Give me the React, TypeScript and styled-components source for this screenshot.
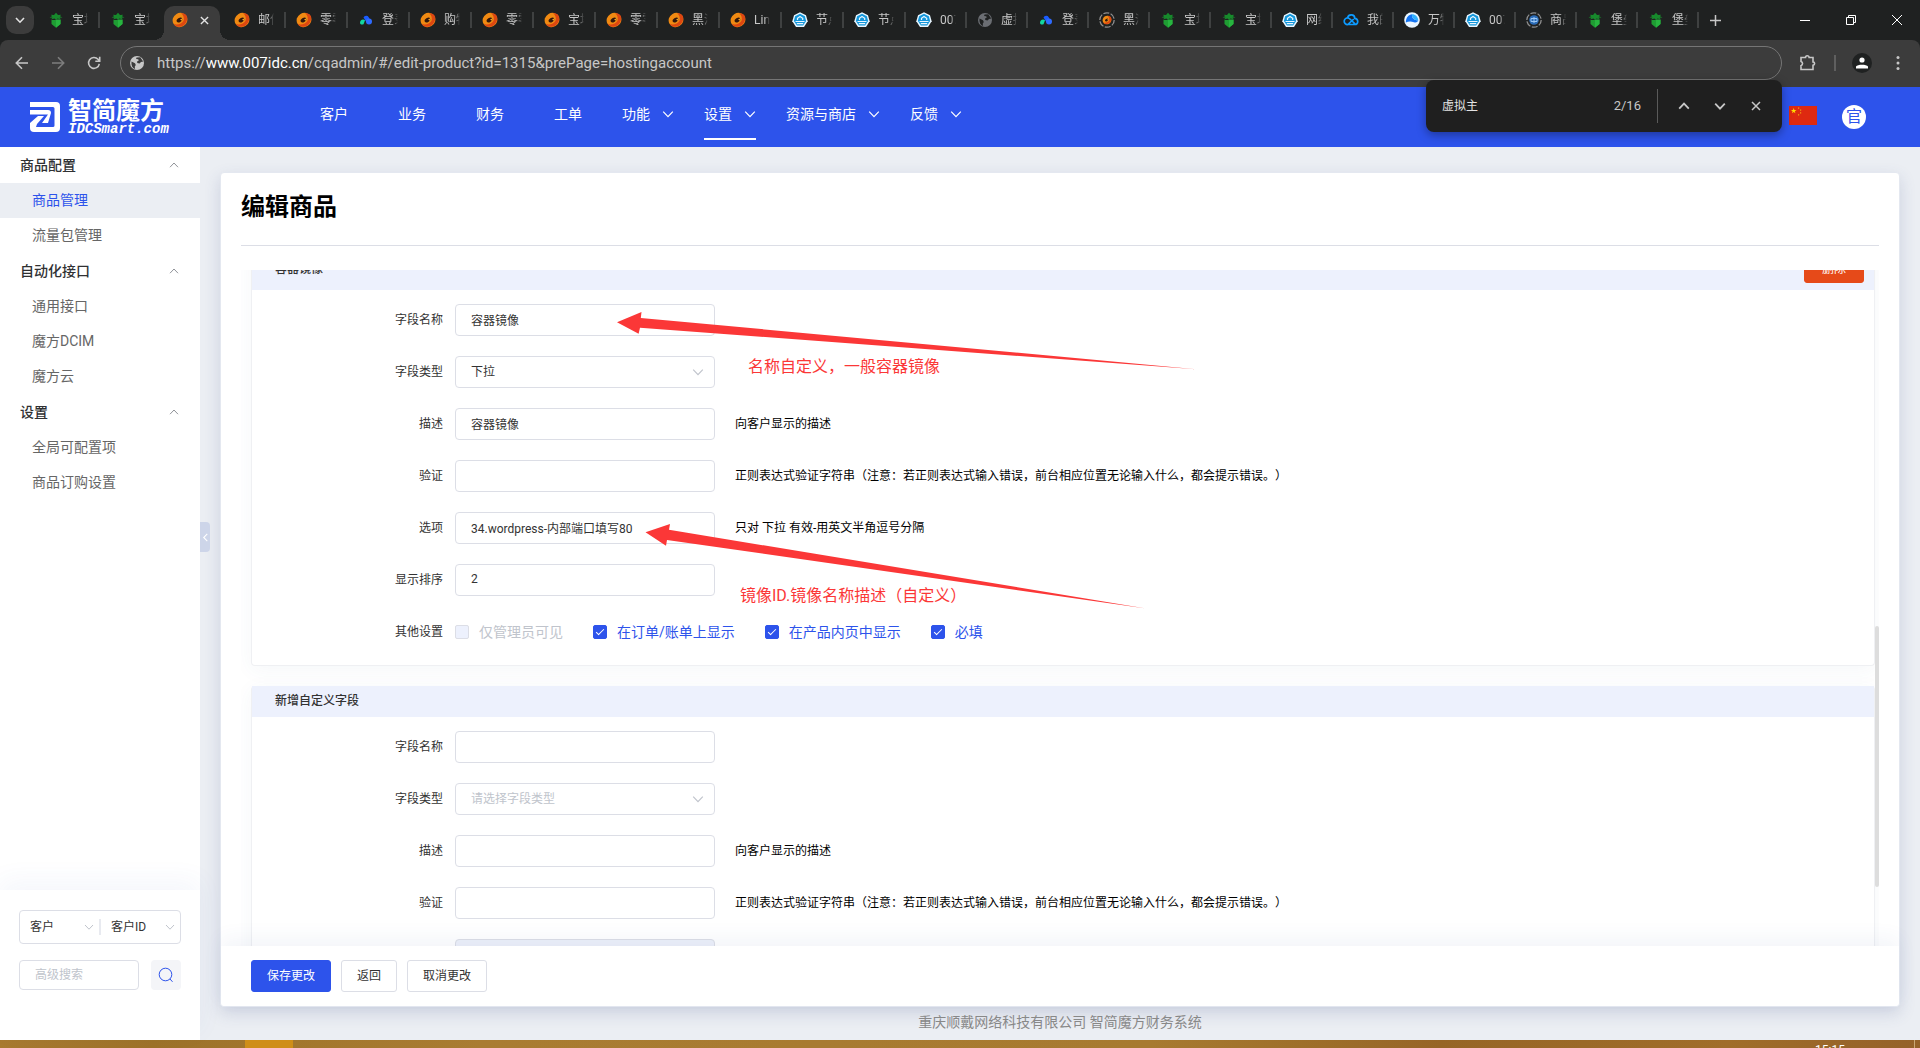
import React, { useId } from "react";
import styled, { createGlobalStyle, css } from "styled-components";

const color = {
  brand: "#2d53eb",
  page: "#ebeef3",
  line: "#dcdee6",
  tint: "#edf1fd",
  text: "#333333",
  muted: "#666666",
  placeholder: "#c0c4cc",
  chromeDark: "#1f2121",
  chrome: "#3c3c3c",
  note: "#fb3737",
  danger: "#e64a19",
};

const GlobalStyle = createGlobalStyle`
  *, *::before, *::after { box-sizing: border-box; }
  body {
    margin: 0;
    background: ${color.page};
    color: ${color.text};
    font-family: Roboto, "Noto Sans CJK SC", sans-serif;
    font-size: 12px;
    line-height: 20px;
    text-spacing-trim: space-all;
  }
  button, input, select { font: inherit; color: inherit; margin: 0; }
  button { border: 0; padding: 0; background: none; cursor: pointer; }
  a { color: inherit; text-decoration: none; }
  h1, h2, p, ul { margin: 0; padding: 0; list-style: none; font-size: inherit; font-weight: inherit; }
  svg { display: block; flex: none; }
`;

const Window = styled.div`
  display: flex;
  flex-direction: column;
  height: 100vh;
  overflow: hidden;
`;

/* ---------- browser tabs ---------- */

const TabStrip = styled.div`
  display: flex;
  flex: none;
  height: 40px;
  padding-left: 6px;
  background: ${color.chromeDark};
  color: #c7c7c7;
`;

const TabSearch = styled.button`
  display: grid;
  place-items: center;
  width: 28px;
  height: 28px;
  margin: 6px 6px 0 0;
  border-radius: 10px;
  background: ${color.chrome};
  color: #e3e3e3;
`;

const Tab = styled.div<{ $width: number; $divider: boolean }>`
  position: relative;
  display: flex;
  align-items: center;
  flex: none;
  gap: 8px;
  width: ${(p) => p.$width}px;
  padding-left: 8px;
  ${(p) =>
    p.$divider &&
    css`
      &::after {
        content: "";
        position: absolute;
        right: 2px;
        top: 12px;
        width: 2px;
        height: 16px;
        background: #3f4141;
      }
    `}
`;

const TabTitle = styled.span`
  width: 16px;
  overflow: hidden;
  white-space: nowrap;
  mask-image: linear-gradient(90deg, #000 65%, transparent);
`;

const ActiveTab = styled.div`
  position: relative;
  display: flex;
  align-items: center;
  flex: none;
  gap: 12px;
  width: 56px;
  height: 34px;
  margin: 6px 6px 0 0;
  padding: 0 8px 6px;
  border-radius: 10px 10px 0 0;
  background: ${color.chrome};
  color: #e3e3e3;
  &::before, &::after {
    content: "";
    position: absolute;
    bottom: 0;
    width: 10px;
    height: 10px;
  }
  &::before {
    left: -10px;
    background: radial-gradient(circle at 0 0, transparent 10px, ${color.chrome} 10px);
  }
  &::after {
    right: -10px;
    background: radial-gradient(circle at 100% 0, transparent 10px, ${color.chrome} 10px);
  }
`;

const NewTab = styled.button`
  display: grid;
  place-items: center;
  width: 28px;
  color: #c7c7c7;
`;

const WindowControls = styled.div`
  display: flex;
  margin-left: auto;
  color: #ffffff;
`;

const WindowButton = styled.button`
  display: grid;
  place-items: center;
  width: 46px;
`;

/* ---------- browser toolbar ---------- */

const ToolbarBack = styled.div`
  flex: none;
  background: ${color.chromeDark};
`;

const Toolbar = styled.div`
  display: flex;
  align-items: center;
  height: 47px;
  padding: 0 4px 2px;
  border-radius: 8px 8px 0 0;
  background: ${color.chrome};
  color: #c7c7c7;
`;

const ToolButton = styled.button<{ $dim?: boolean }>`
  display: grid;
  place-items: center;
  flex: none;
  width: 36px;
  height: 34px;
  color: ${(p) => (p.$dim ? "#7d7d7d" : "#c7c7c7")};
`;

const AddressBar = styled.div`
  display: flex;
  align-items: center;
  flex: 1;
  gap: 12px;
  height: 34px;
  margin: 0 8px;
  padding-left: 8px;
  border: 1px solid #757575;
  border-radius: 17px;
`;

const Address = styled.a`
  font-size: 15px;
  color: #c7c7c7;
  strong { font-weight: 400; color: #ffffff; }
`;

const ToolDivider = styled.span`
  width: 2px;
  height: 16px;
  margin: 0 8px;
  background: #5f5f5f;
`;

const Profile = styled.span`
  display: grid;
  place-items: center;
  width: 20px;
  height: 20px;
  border-radius: 50%;
  background: ${color.chromeDark};
`;

const FindBar = styled.div`
  position: absolute;
  z-index: 5;
  top: 80px;
  right: 138px;
  display: flex;
  align-items: center;
  width: 356px;
  height: 52px;
  padding: 0 8px 0 16px;
  border-radius: 8px;
  background: #1f1f1f;
  box-shadow: 0 3px 10px rgba(0, 0, 0, 0.35);
  color: #e3e3e3;
`;

const FindInput = styled.input`
  flex: 1;
  min-width: 0;
  padding: 0;
  border: 0;
  outline: 0;
  background: none;
`;

const FindCount = styled.span`
  padding-right: 16px;
  font-size: 13px;
  color: #c7c7c7;
`;

const FindActions = styled.div`
  display: flex;
  padding-left: 8px;
  border-left: 1px solid #5a5a5a;
`;

/* ---------- site header ---------- */

const Header = styled.header`
  display: flex;
  flex: none;
  height: 60px;
  background: ${color.brand};
  color: #ffffff;
  font-size: 14px;
`;

const Brand = styled.a`
  display: flex;
  align-items: center;
  gap: 8px;
  width: 295px;
  padding-left: 30px;
`;

const BrandText = styled.span`
  display: flex;
  flex-direction: column;
  white-space: nowrap;
`;

const BrandName = styled.span`
  font-size: 24px;
  font-weight: 700;
  line-height: 24px;
`;

const BrandDomain = styled.span`
  font-family: "Liberation Mono", monospace;
  font-size: 14px;
  font-style: italic;
  font-weight: 700;
  line-height: 12px;
`;

const Menu = styled.nav`
  display: flex;
`;

const MenuLink = styled.a<{ $arrow?: boolean; $active?: boolean }>`
  position: relative;
  display: flex;
  align-items: center;
  gap: 12px;
  margin: 0 ${(p) => (p.$arrow ? 15 : 25)}px;
  padding-bottom: 6px;
  ${(p) =>
    p.$active &&
    css`
      &::after {
        content: "";
        position: absolute;
        left: 0;
        right: 0;
        bottom: 7px;
        height: 2px;
        background: #ffffff;
      }
    `}
`;

const HeaderTools = styled.div`
  display: flex;
  align-items: center;
  gap: 25px;
  margin-left: auto;
  padding: 0 54px 4px 0;
`;

const Badge = styled.button`
  display: grid;
  place-items: center;
  width: 24px;
  height: 24px;
  margin-top: 4px;
  border-radius: 50%;
  background: #ffffff;
  color: ${color.brand};
  font-size: 16px;
`;

/* ---------- sidebar ---------- */

const Body = styled.div`
  display: flex;
  flex: 1;
  min-height: 0;
`;

const Sidebar = styled.aside`
  position: relative;
  display: flex;
  flex-direction: column;
  flex: none;
  width: 200px;
  background: #ffffff;
  font-size: 14px;
`;

const SideHeading = styled.h2`
  display: flex;
  align-items: center;
  justify-content: space-between;
  height: 36px;
  padding: 0 21px 0 20px;
  font-weight: 500;
  color: #303133;
  svg { color: #909399; }
`;

const SideLink = styled.a<{ $active?: boolean }>`
  display: flex;
  align-items: center;
  height: 35px;
  padding: 0 0 2px 32px;
  background: ${(p) => (p.$active ? color.page : "transparent")};
  color: ${(p) => (p.$active ? color.brand : color.muted)};
`;

const SideSearch = styled.form`
  display: flex;
  flex-direction: column;
  gap: 16px;
  height: 150px;
  margin-top: auto;
  padding: 20px 19px;
  background: #ffffff;
  box-shadow: 0 -10px 24px rgba(60, 100, 190, 0.05);
  font-size: 12px;
`;

const ScopeGroup = styled.div`
  display: flex;
  align-items: center;
  height: 34px;
  border: 1px solid ${color.line};
  border-radius: 4px;
`;

const ScopeDivider = styled.span`
  width: 2px;
  height: 16px;
  background: #e8eaf0;
`;

const SearchRow = styled.div`
  display: flex;
  justify-content: space-between;
`;

const SearchInput = styled.input`
  width: 120px;
  height: 30px;
  padding: 0 15px;
  border: 1px solid ${color.line};
  border-radius: 4px;
  &::placeholder { color: ${color.placeholder}; }
`;

const SearchButton = styled.button`
  display: grid;
  place-items: center;
  width: 30px;
  height: 30px;
  border-radius: 4px;
  background: #f4f5f8;
  color: ${color.brand};
`;

const Collapse = styled.button`
  position: absolute;
  left: 200px;
  top: 375px;
  display: grid;
  place-items: center;
  width: 10px;
  height: 30px;
  border-radius: 0 4px 4px 0;
  background: #cdd5e9;
  color: #ffffff;
`;

/* ---------- content ---------- */

const Main = styled.main`
  display: flex;
  flex-direction: column;
  flex: 1;
  min-width: 0;
  padding: 25px 20px 0;
`;

const Card = styled.section`
  display: flex;
  flex-direction: column;
  flex: 1;
  min-height: 0;
  border: 1px solid #e4e8f0;
  border-radius: 4px;
  background: #ffffff;
  box-shadow: 0 6px 16px rgba(60, 80, 140, 0.18);
`;

const Title = styled.h1`
  margin: 0 20px 24px;
  padding: 16px 0 20px;
  border-bottom: 1px solid ${color.line};
  font-size: 24px;
  font-weight: 700;
  line-height: 36px;
  color: #000000;
`;

const ScrollArea = styled.div`
  position: relative;
  flex: 1;
  min-height: 0;
  margin: 0 20px;
  padding: 0 4px 0 10px;
  overflow: hidden;
`;

const ScrollThumb = styled.span`
  position: absolute;
  right: 0;
  top: 356px;
  width: 4px;
  height: 261px;
  border-radius: 2px;
  background: #dddddd;
`;

const Scrolled = styled.div`
  display: flex;
  flex-direction: column;
  gap: 20px;
  margin-top: -21px;
`;

const Panel = styled.section`
  border: 1px solid #eff0f3;
  border-top: 0;
  border-radius: 4px;
  box-shadow: 0 4px 20px rgba(60, 90, 140, 0.05);
`;

const PanelHead = styled.div`
  display: flex;
  align-items: center;
  justify-content: space-between;
  padding: 6px 10px 7px 23px;
  background: ${color.tint};
`;

const PanelTitle = styled.h2`
  line-height: 18px;
  font-weight: 500;
`;

const Rows = styled.div`
  display: flex;
  flex-direction: column;
  gap: 20px;
  padding: 14px 0 17px 83px;
`;

const Row = styled.div`
  display: flex;
  align-items: center;
  height: 32px;
`;

const RowLabel = styled.label`
  width: 120px;
  padding-right: 12px;
  text-align: right;
`;

const Help = styled.p`
  margin-left: 20px;
  color: #000000;
`;

const TextInput = styled.input`
  width: 260px;
  height: 32px;
  padding: 0 15px 2px;
  border: 1px solid ${color.line};
  border-radius: 4px;
  outline: 0;
  background: #ffffff;
  &:disabled { background: #eef1fa; }
`;

const SelectBox = styled.span<{ $width?: number; $plain?: boolean }>`
  position: relative;
  display: flex;
  align-items: center;
  width: ${(p) => p.$width ?? 260}px;
  height: 32px;
  border: 1px solid ${(p) => (p.$plain ? "transparent" : color.line)};
  border-radius: 4px;
  color: ${color.placeholder};
  svg {
    position: absolute;
    right: ${(p) => (p.$plain ? 4 : 10)}px;
    pointer-events: none;
  }
`;

const Select = styled.select<{ $empty?: boolean; $pad?: number }>`
  width: 100%;
  height: 100%;
  padding: 0 0 0 ${(p) => p.$pad ?? 15}px;
  border: 0;
  outline: 0;
  appearance: none;
  background: none;
  color: ${(p) => (p.$empty ? color.placeholder : color.text)};
`;

const Checks = styled.div`
  display: flex;
  gap: 30px;
`;

const Check = styled.label<{ $disabled?: boolean }>`
  display: flex;
  align-items: center;
  gap: 10px;
  font-size: 14px;
  color: ${(p) => (p.$disabled ? color.placeholder : color.brand)};
`;

const CheckInput = styled.input`
  display: grid;
  place-items: center;
  width: 14px;
  height: 14px;
  border: 1px solid ${color.line};
  border-radius: 2px;
  appearance: none;
  background: ${color.tint};
  &:checked { border-color: ${color.brand}; background: ${color.brand}; }
  &:checked::after {
    content: "";
    width: 4px;
    height: 8px;
    margin-bottom: 2px;
    border: solid #ffffff;
    border-width: 0 1px 1px 0;
    transform: rotate(45deg);
  }
`;

const Actions = styled.div`
  position: relative;
  display: flex;
  gap: 10px;
  padding: 14px 30px;
  border-radius: 0 0 4px 4px;
  background: #ffffff;
  box-shadow: 0 -8px 20px rgba(45, 83, 160, 0.06);
`;

const Button = styled.button<{ $kind?: "primary" | "danger" }>`
  height: 32px;
  padding: 0 15px;
  border: 1px solid ${color.line};
  border-radius: 3px;
  background: #ffffff;
  ${(p) =>
    p.$kind === "primary" &&
    css`
      border-color: ${color.brand};
      background: ${color.brand};
      color: #ffffff;
    `}
  ${(p) =>
    p.$kind === "danger" &&
    css`
      width: 60px;
      height: 28px;
      border-color: ${color.danger};
      background: ${color.danger};
      color: #ffffff;
    `}
`;

const Copyright = styled.footer`
  padding: 5px 0 8px;
  text-align: center;
  font-size: 14px;
  color: #888888;
`;

/* ---------- desktop taskbar ---------- */

const Taskbar = styled.div`
  display: flex;
  flex: none;
  height: 8px;
  overflow: hidden;
  padding-left: 245px;
  background: linear-gradient(90deg, #a87a30, #9d7229 8%, #a97c32 25%, #a77a30 60%, #966526 75%, #a06d2a 90%, #94612a);
  color: #ffffff;
`;

const TaskItem = styled.span`
  width: 48px;
  background: #cf8e18;
`;

const Clock = styled.time`
  margin: 0 5px 0 auto;
  padding-right: 69px;
  border-right: 1px solid #c9a877;
`;

/* ---------- annotations ---------- */

const Arrows = styled.svg`
  position: absolute;
  z-index: 3;
  left: 0;
  top: 0;
  pointer-events: none;
`;

const Note = styled.p<{ $x: number; $y: number }>`
  position: absolute;
  z-index: 3;
  left: ${(p) => p.$x}px;
  top: ${(p) => p.$y}px;
  font-size: 16px;
  line-height: 24px;
  color: ${color.note};
`;

/* ---------- drawings ---------- */

type ChevronProps = { dir: "up" | "down" | "left"; size?: number; weight?: number };

function Chevron({ dir, size = 10, weight = 1 }: ChevronProps) {
  const d = { up: "M1 7.2 5 3l4 4.2", down: "M1 3l4 4.2L9 3", left: "M7 1 3 5l4 4" }[dir];
  return (
    <svg width={size} height={size} viewBox="0 0 10 10" fill="none" stroke="currentColor" strokeWidth={weight} aria-hidden>
      <path d={d} />
    </svg>
  );
}

function Cross({ size = 10 }: { size?: number }) {
  return (
    <svg width={size} height={size} viewBox="0 0 10 10" stroke="currentColor" strokeWidth="1.5" aria-hidden>
      <path d="M1 1l8 8M9 1L1 9" />
    </svg>
  );
}

type IconKind = "tree" | "swirl" | "triad" | "hex" | "globe" | "loadSwirl" | "loadBlue" | "cloud" | "wave";

function GlobeShape({ fill, cut }: { fill: string; cut: string }) {
  return (
    <>
      <circle cx="8" cy="8" r="7" fill={fill} />
      <path d="M2.5 6.5 6 8.200l.8 1.8-1 1.5.2 2.500C3.5 13 2 10.500 2.500 6.500ZM7.500 2.500l3.8-.3 2.9 4.300-2.200.4-1.500 1.600-2.200-.4-.3-1.600 1.600-.8-.3-1.500-2.200-.3Z" fill={cut} />
    </>
  );
}

function Swirl() {
  return (
    <>
      <ellipse cx="8" cy="8" rx="7.5" ry="7" fill="#f08a12" transform="rotate(-30 8 8)" />
      <path d="M15 4.500c1 4-1.500 9.500-7 10.300-2.800.3-5-.8-6.200-2.800 3.500 1.200 8.200-.2 9.700-3.200C12.500 6.500 11.500 3 9 1.200 12 .8 14.500 2.200 15 4.500Z" fill="#dd4711" />
      <ellipse cx="7.5" cy="8" rx="3.2" ry="2" fill="#33180c" transform="rotate(-35 7.5 8)" />
      <path d="M8 7.500l3-1.500-1 2.800Z" fill="#f5a32a" />
    </>
  );
}

function Favicon({ kind }: { kind: IconKind }) {
  return (
    <svg width="16" height="16" viewBox="0 0 16 16" aria-hidden>
      {kind === "tree" && (
        <>
          <path d="M3.500 8h9v4L8 15.800 3.500 12Z" fill="#1f9d33" />
          <path d="M8 7.500h4.500V12L8 15.800Z" fill="#27b53f" />
          <path d="M1.500 5.500 4 4.300 3 2.800l3 .3L8 .8l2 2.300 3-.3-1 1.500 2.500 1.200-3 .2L13 7.500l-3.500-1L8 8 6.500 6.500 3 7.500l1.500-1.800Z" fill="#178a2c" />
        </>
      )}
      {kind === "swirl" && <Swirl />}
      {kind === "triad" && (
        <>
          <path d="M5.500 5.500a3 3 0 0 1 5.200-.3l1.300 2.500-3.500 2.500Z" fill="#1a5cff" />
          <circle cx="11" cy="9.5" r="3" fill="#2f6bff" />
          <path d="M2 10.500c.3-2.500 3-3.800 5-2.200l-1.500 4C3.500 13 2 12.500 2 10.500Z" fill="#12d6a0" />
        </>
      )}
      {kind === "hex" && (
        <>
          <path d="M8 .3 14 3.200l1.700 6L12 15H4L.3 9.200 2 3.200Z" fill="#e8f6ff" />
          <path d="M8 1.800 12.900 4.200l1.200 4.800-3 4.500H4.900L1.900 9l1.200-4.800Z" fill="#1296db" />
          <path d="M3.500 9.500h9M4.800 11.700h6.400M5.500 8V6.300L8 4.500l2.700 1.800V8" stroke="#e8f6ff" strokeWidth="1.2" fill="none" />
        </>
      )}
      {kind === "globe" && <GlobeShape fill="#6b6e73" cut={color.chromeDark} />}
      {(kind === "loadSwirl" || kind === "loadBlue") && (
        <circle cx="8" cy="8" r="7.2" fill="none" stroke="#8f8f8f" strokeWidth="1.3" strokeDasharray="6 1.5" />
      )}
      {kind === "loadSwirl" && (
        <g transform="translate(3.200 3.200) scale(.6)"><Swirl /></g>
      )}
      {kind === "loadBlue" && (
        <>
          <circle cx="8" cy="8" r="4.8" fill="#2b6cb8" />
          <path d="M5 6.500h6v3H5ZM8 5v6" stroke="#9cc8f5" fill="none" />
        </>
      )}
      {kind === "cloud" && (
        <path d="M5 12.500a3.300 3.300 0 1 1 .8-6.300c1.200.3 4.700 4.200 6.200 5.800M4.500 6.300c.5-4.300 7-4.800 7.300 0 3.800.3 4 6.200 0 6.200H5l5.800-5.500" fill="none" stroke="#0d9bff" strokeWidth="1.7" />
      )}
      {kind === "wave" && (
        <>
          <circle cx="8" cy="8" r="7.8" fill="#eaf6ff" />
          <path d="M1.800 10.500C2 5 5 2.500 8 2.200c-.5 4 2.500 6 6.300 6.300-.8 1.500-2.300 2.300-4.300 1.700C6.500 9 4 9.500 1.800 10.500Z" fill="#1273f2" />
          <path d="M8 2.200c3.500 0 6 2.600 6.300 6.300C10.500 8.200 7.500 6.200 8 2.200Z" fill="#2fb2ff" />
        </>
      )}
    </svg>
  );
}

function LogoMark() {
  return (
    <svg width="30" height="30" viewBox="0 0 30 30" aria-hidden>
      <path d="M0 0h26a4 4 0 0 1 4 4v22a4 4 0 0 1-4 4H4a4 4 0 0 1-4-4v-5l8-7h6l-7 8-1 3h17a1.500 1.500 0 0 0 1.500-1.500V6.500A1.500 1.500 0 0 0 23 5H0Z" fill="#fff" />
      <path d="M0 8h18a3 3 0 0 1 3 3l-3 10h-6l6-8.500H0Z" fill="#fff" />
    </svg>
  );
}

function Flag() {
  return (
    <svg width="28" height="19" viewBox="0 0 28 19" aria-hidden>
      <path d="M0 0h28v19H0Z" fill="#de2910" />
      <path d="M4.700 2l.7 2h2.100L5.800 5.300l.6 2-1.700-1.200L3 7.300l.6-2L1.900 4H4Z" fill="#ffde00" />
      <path d="M9 1.500h1.200v1.200H9ZM11 3.500h1.200v1.200H11ZM11 6.200h1.200v1.200H11ZM9 8.200h1.200v1.200H9Z" fill="#f0a010" />
    </svg>
  );
}

/* ---------- data ---------- */

const tabsBefore: [IconKind, string][] = [["tree", "宝塔"], ["tree", "宝塔"]];

const tabsAfter: [IconKind, string][] = [
  ["swirl", "邮件"], ["swirl", "零零"], ["triad", "登录"], ["swirl", "购物"], ["swirl", "零零"],
  ["swirl", "宝塔"], ["swirl", "零零"], ["swirl", "黑洞"], ["swirl", "Linux"], ["hex", "节点"],
  ["hex", "节点"], ["hex", "007"], ["globe", "虚拟"], ["triad", "登录"], ["loadSwirl", "黑洞"],
  ["tree", "宝塔"], ["tree", "宝塔"], ["hex", "网络"], ["cloud", "我的"], ["wave", "万物"],
  ["hex", "007"], ["loadBlue", "商品"], ["tree", "堡垒"], ["tree", "堡垒"],
];

const menu = [
  { text: "客户" }, { text: "业务" }, { text: "财务" }, { text: "工单" },
  { text: "功能", arrow: true }, { text: "设置", arrow: true, active: true },
  { text: "资源与商店", arrow: true }, { text: "反馈", arrow: true },
];

const side = [
  { title: "商品配置", items: ["商品管理", "流量包管理"] },
  { title: "自动化接口", items: ["通用接口", "魔方DCIM", "魔方云"] },
  { title: "设置", items: ["全局可配置项", "商品订购设置"] },
];

const helpText = {
  desc: "向客户显示的描述",
  rule: "正则表达式验证字符串（注意：若正则表达式输入错误，前台相应位置无论输入什么，都会提示错误。）",
  option: "只对 下拉 有效-用英文半角逗号分隔",
};

/* ---------- parts ---------- */

type FieldProps = { label: string; value?: string; help?: string; disabled?: boolean };

function Field({ label, value = "", help, disabled }: FieldProps) {
  const id = useId();
  return (
    <Row>
      <RowLabel htmlFor={id}>{label}</RowLabel>
      <TextInput id={id} defaultValue={value} disabled={disabled} />
      {help && <Help>{help}</Help>}
    </Row>
  );
}

function TypeField({ value }: { value?: string }) {
  const id = useId();
  return (
    <Row>
      <RowLabel htmlFor={id}>字段类型</RowLabel>
      <SelectBox>
        <Select id={id} $empty={!value}>
          <option>{value ?? "请选择字段类型"}</option>
        </Select>
        <Chevron dir="down" size={12} />
      </SelectBox>
    </Row>
  );
}

function Scope({ value, label }: { value: string; label: string }) {
  return (
    <SelectBox $width={79} $plain>
      <Select $pad={9} aria-label={label}>
        <option>{value}</option>
      </Select>
      <Chevron dir="down" />
    </SelectBox>
  );
}

function BrowserChrome() {
  return (
    <>
      <TabStrip>
        <TabSearch aria-label="搜索标签页"><Chevron dir="down" weight={1.6} /></TabSearch>
        {tabsBefore.map(([kind, text], i) => (
          <Tab key={i} $width={62} $divider={i === 0}>
            <Favicon kind={kind} />
            <TabTitle>{text}</TabTitle>
          </Tab>
        ))}
        <ActiveTab>
          <Favicon kind="swirl" />
          <button aria-label="关闭标签页"><Cross size={9} /></button>
        </ActiveTab>
        {tabsAfter.map(([kind, text], i) => (
          <Tab key={i} $width={i < 11 ? 62 : 61} $divider>
            <Favicon kind={kind} />
            <TabTitle>{text}</TabTitle>
          </Tab>
        ))}
        <NewTab aria-label="新标签页">
          <svg width="11" height="11" viewBox="0 0 11 11" stroke="currentColor" strokeWidth="1.5"><path d="M5.500 0v11M0 5.500h11" /></svg>
        </NewTab>
        <WindowControls>
          <WindowButton aria-label="最小化">
            <svg width="10" height="10" viewBox="0 0 10 10" stroke="currentColor"><path d="M0 5.500h10" /></svg>
          </WindowButton>
          <WindowButton aria-label="还原">
            <svg width="10" height="10" viewBox="0 0 10 10" stroke="currentColor" fill="none"><path d="M.5 2.500h7v7h-7ZM2.500 2.500v-2h7v7h-2" /></svg>
          </WindowButton>
          <WindowButton aria-label="关闭">
            <svg width="10" height="10" viewBox="0 0 10 10" stroke="currentColor"><path d="M0 0l10 10M10 0L0 10" /></svg>
          </WindowButton>
        </WindowControls>
      </TabStrip>
      <ToolbarBack>
        <Toolbar>
          <ToolButton aria-label="后退">
            <svg width="14" height="14" viewBox="0 0 14 14" fill="none" stroke="currentColor" strokeWidth="1.6"><path d="M13 7H1.500M7 1.300 1.300 7 7 12.700" /></svg>
          </ToolButton>
          <ToolButton $dim aria-label="前进">
            <svg width="14" height="14" viewBox="0 0 14 14" fill="none" stroke="currentColor" strokeWidth="1.6"><path d="M1 7h11.500M7 1.300 12.700 7 7 12.700" /></svg>
          </ToolButton>
          <ToolButton aria-label="重新加载">
            <svg width="14" height="14" viewBox="0 0 14 14" fill="none" stroke="currentColor" strokeWidth="1.6"><path d="M12.300 7.800A5.400 5.400 0 1 1 11 3.300L12.500 5M12.700.8V5.200H8.300" /></svg>
          </ToolButton>
          <AddressBar>
            <svg width="16" height="16" viewBox="0 0 16 16" aria-hidden><GlobeShape fill="#c7c7c7" cut={color.chrome} /></svg>
            <Address href="#/edit-product">
              https://<strong>www.007idc.cn</strong>/cqadmin/#/edit-product?id=1315&amp;prePage=hostingaccount
            </Address>
          </AddressBar>
          <ToolButton aria-label="扩展程序">
            <svg width="18" height="18" viewBox="0 0 18 18" fill="none" stroke="currentColor" strokeWidth="1.6">
              <path d="M2 3.500h4.500a1.800 1.800 0 0 1 3.600 0H14V8a1.600 1.600 0 0 1 0 3.200v4.300H2v-3.800a2.200 2.200 0 0 0 0-4.200Z" />
            </svg>
          </ToolButton>
          <ToolDivider />
          <ToolButton aria-label="个人资料">
            <Profile>
              <svg width="12" height="12" viewBox="0 0 12 12" fill="#fff"><circle cx="6" cy="3" r="2.6" /><path d="M0 11.500V9.500C1.500 7 10.500 7 12 9.500v2Z" /></svg>
            </Profile>
          </ToolButton>
          <ToolButton aria-label="菜单">
            <svg width="4" height="16" viewBox="0 0 4 16" fill="currentColor"><circle cx="2" cy="2.5" r="1.5" /><circle cx="2" cy="8" r="1.5" /><circle cx="2" cy="13.5" r="1.5" /></svg>
          </ToolButton>
        </Toolbar>
      </ToolbarBack>
      <FindBar role="search">
        <FindInput aria-label="在网页中查找" defaultValue="虚拟主" />
        <FindCount>2/16</FindCount>
        <FindActions>
          <ToolButton aria-label="上一个"><Chevron dir="up" size={12} weight={1.5} /></ToolButton>
          <ToolButton aria-label="下一个"><Chevron dir="down" size={12} weight={1.5} /></ToolButton>
          <ToolButton aria-label="关闭查找"><Cross /></ToolButton>
        </FindActions>
      </FindBar>
    </>
  );
}

export default function App() {
  return (
    <Window>
      <GlobalStyle />
      <BrowserChrome />

      <Header>
        <Brand href="#/">
          <LogoMark />
          <BrandText>
            <BrandName>智简魔方</BrandName>
            <BrandDomain>IDCSmart.com</BrandDomain>
          </BrandText>
        </Brand>
        <Menu>
          {menu.map((m) => (
            <MenuLink key={m.text} href="#/" $arrow={m.arrow} $active={m.active}>
              {m.text}
              {m.arrow && <Chevron dir="down" size={12} />}
            </MenuLink>
          ))}
        </Menu>
        <HeaderTools>
          <Flag />
          <Badge>官</Badge>
        </HeaderTools>
      </Header>

      <Body>
        <Sidebar>
          {side.map((group) => (
            <nav key={group.title}>
              <SideHeading>
                {group.title}
                <Chevron dir="up" />
              </SideHeading>
              {group.items.map((item) => (
                <SideLink key={item} href="#/" $active={item === "商品管理"}>{item}</SideLink>
              ))}
            </nav>
          ))}
          <SideSearch>
            <ScopeGroup>
              <Scope value="客户" label="搜索对象" />
              <ScopeDivider />
              <Scope value="客户ID" label="搜索字段" />
            </ScopeGroup>
            <SearchRow>
              <SearchInput placeholder="高级搜索" aria-label="高级搜索" />
              <SearchButton type="button" aria-label="搜索">
                <svg width="16" height="16" viewBox="0 0 16 16" fill="none" stroke="currentColor"><circle cx="7.5" cy="7.5" r="6.3" /><path d="M12 12l2.500 2.800" /></svg>
              </SearchButton>
            </SearchRow>
          </SideSearch>
          <Collapse aria-label="收起侧栏"><Chevron dir="left" size={9} weight={1.2} /></Collapse>
        </Sidebar>

        <Main>
          <Card>
            <Title>编辑商品</Title>
            <ScrollArea>
              <Scrolled>
                <Panel>
                  <PanelHead>
                    <PanelTitle>容器镜像</PanelTitle>
                    <Button $kind="danger">删除</Button>
                  </PanelHead>
                  <Rows>
                    <Field label="字段名称" value="容器镜像" />
                    <TypeField value="下拉" />
                    <Field label="描述" value="容器镜像" help={helpText.desc} />
                    <Field label="验证" help={helpText.rule} />
                    <Field label="选项" value="34.wordpress-内部端口填写80" help={helpText.option} />
                    <Field label="显示排序" value="2" />
                    <Row>
                      <RowLabel as="span">其他设置</RowLabel>
                      <Checks>
                        <Check $disabled><CheckInput type="checkbox" disabled />仅管理员可见</Check>
                        <Check><CheckInput type="checkbox" defaultChecked />在订单/账单上显示</Check>
                        <Check><CheckInput type="checkbox" defaultChecked />在产品内页中显示</Check>
                        <Check><CheckInput type="checkbox" defaultChecked />必填</Check>
                      </Checks>
                    </Row>
                  </Rows>
                </Panel>
                <Panel>
                  <PanelHead>
                    <PanelTitle>新增自定义字段</PanelTitle>
                  </PanelHead>
                  <Rows>
                    <Field label="字段名称" />
                    <TypeField />
                    <Field label="描述" help={helpText.desc} />
                    <Field label="验证" help={helpText.rule} />
                    <Field label="选项" disabled help={helpText.option} />
                  </Rows>
                </Panel>
              </Scrolled>
              <ScrollThumb />
            </ScrollArea>
            <Actions>
              <Button $kind="primary">保存更改</Button>
              <Button>返回</Button>
              <Button>取消更改</Button>
            </Actions>
          </Card>
          <Copyright>重庆顺戴网络科技有限公司 智简魔方财务系统</Copyright>
        </Main>
      </Body>

      <Taskbar>
        <TaskItem />
        <Clock>15:15</Clock>
      </Taskbar>

      <Arrows width="1200" height="620" viewBox="0 0 1200 620" fill={color.note} aria-hidden>
        <path d="M617 322.300 641.500 312l-.7 6L1196 369.200 640 327.700l-1.400 6Z" />
        <path d="M645.500 532.300 670 524l-1 5.700L1146 608.500 667 540l-1 5.700Z" />
      </Arrows>
      <Note $x={748} $y={355}>名称自定义，一般容器镜像</Note>
      <Note $x={740} $y={584}>镜像ID.镜像名称描述（自定义）</Note>
    </Window>
  );
}
